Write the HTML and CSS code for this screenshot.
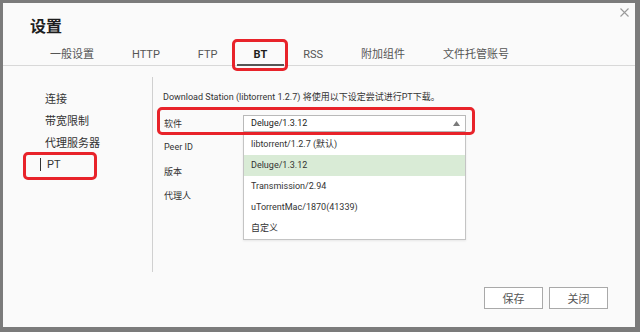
FILE: index.html
```html
<!DOCTYPE html>
<html lang="zh-CN">
<head>
<meta charset="utf-8">
<title>设置</title>
<link rel="stylesheet" href="styles.css">
</head>
<body>
<div class="dialog">
  <div class="header">
    <h1 class="title">设置</h1>
    <span class="close">
      <svg width="9" height="9" viewBox="0 0 9 9"><path d="M0.5 0.5 L8.5 8.5 M8.5 0.5 L0.5 8.5" stroke="#9a9a9a" stroke-width="1.1" fill="none"/></svg>
    </span>
  </div>
  <div class="tabs">
    <span class="tab">一般设置</span>
    <span class="tab">HTTP</span>
    <span class="tab">FTP</span>
    <span class="tab active">BT</span>
    <span class="tab">RSS</span>
    <span class="tab">附加组件</span>
    <span class="tab">文件托管账号</span>
  </div>
  <div class="main">
    <div class="sidebar">
      <div class="nav-item">连接</div>
      <div class="nav-item">带宽限制</div>
      <div class="nav-item">代理服务器</div>
      <div class="nav-item active"><span class="nav-mark">PT</span></div>
    </div>
    <div class="content">
      <p class="desc">Download Station (libtorrent 1.2.7) 将使用以下设定尝试进行PT下载。</p>
      <div class="row">
        <span class="label">软件</span>
        <div class="select">
          <span class="select-value">Deluge/1.3.12</span>
          <svg class="arrow" width="7" height="5" viewBox="0 0 7 5"><path d="M0 5 L3.5 0 L7 5 Z" fill="#7a7a7a"/></svg>
          <div class="menu">
            <div class="menu-item">libtorrent/1.2.7 (默认)</div>
            <div class="menu-item selected">Deluge/1.3.12</div>
            <div class="menu-item">Transmission/2.94</div>
            <div class="menu-item">uTorrentMac/1870(41339)</div>
            <div class="menu-item">自定义</div>
          </div>
        </div>
      </div>
      <div class="row">
        <span class="label">Peer ID</span>
      </div>
      <div class="row">
        <span class="label">版本</span>
      </div>
      <div class="row">
        <span class="label">代理人</span>
        <span class="value">Deluge/1.3.12 (http://deluge-torrent.org)</span>
      </div>
    </div>
  </div>
  <div class="footer">
    <button class="btn">保存</button>
    <button class="btn">关闭</button>
  </div>
</div>
<div class="mark mark-tab"></div>
<div class="mark mark-row"></div>
<div class="mark mark-nav"></div>
</body>
</html>
```

FILE: styles.css
```css
* { box-sizing: border-box; }
html, body { margin: 0; padding: 0; }
body {
  width: 640px;
  height: 332px;
  overflow: hidden;
  background: #7b7b7b;
  font-family: Roboto, "Noto Sans CJK SC", sans-serif;
  color: #333;
  position: relative;
}
.dialog {
  margin: 3px 0 0 3px;
  width: 632px;
  height: 324px;
  background: #fafafa;
  display: flex;
  flex-direction: column;
}
.header {
  display: flex;
  justify-content: space-between;
  align-items: flex-start;
  padding: 12px 6px 0 27px;
  height: 32px;
}
.title {
  margin: 0;
  font-size: 16px;
  line-height: 20px;
  font-weight: bold;
  color: #1e1e1e;
  font-family: "Noto Sans CJK SC", sans-serif;
}
.close { display: block; margin-top: -7px; line-height: 0; }
.tabs {
  display: flex;
  margin-top: 10px;
  padding-left: 28px;
  border-bottom: 1px solid #d8d8d8;
}
.tab {
  padding: 0 19px;
  font-size: 11px;
  line-height: 20px;
  color: #555;
}
.tab.active {
  font-weight: bold;
  color: #1e1e1e;
  padding: 0 17px;
  border-bottom: 2px solid #555;
  margin-bottom: -1px;
  line-height: 19px;
}
.main {
  display: flex;
  height: 206px;
}
.sidebar {
  width: 150px;
  margin-top: 11px;
  height: 195px;
  border-right: 1px solid #d0d0d0;
  padding: 10px 0 0 37px;
}
.nav-item {
  height: 22px;
  display: flex;
  align-items: center;
  padding-left: 5px;
  font-size: 11px;
  color: #333;
}
.nav-item.active { padding-left: 0; }
.nav-mark {
  border-left: 1px solid #333;
  padding-left: 6px;
  line-height: 13px;
}
.content {
  flex: 1;
  padding: 23px 0 0 11px;
}
.desc {
  margin: 0 0 6px -1px;
  font-size: 9px;
  line-height: 16px;
  color: #333;
}
.row {
  display: flex;
  align-items: center;
  height: 24px;
  font-size: 9px;
}
.label { width: 79px; color: #333; }
.value { color: #f0f0f0; padding-left: 8px; }
.select {
  position: relative;
  width: 223px;
  height: 17px;
  border: 1px solid #b9b9b9;
  background: #fff;
  display: flex;
  align-items: center;
  justify-content: space-between;
  padding: 0 5px 0 7px;
}
.select-value { color: #222; }
.arrow { display: block; }
.menu {
  position: absolute;
  left: -1px;
  top: 16px;
  width: 223px;
  border: 1px solid #c4c4c4;
  background: rgba(255, 255, 255, 0.97);
  padding-top: 1px;
  box-shadow: 0 1px 2px rgba(0,0,0,0.08);
}
.menu-item {
  height: 21px;
  line-height: 21px;
  padding-left: 7px;
  color: #333;
  font-size: 9px;
}
.menu-item.selected { background: #d9ebd6; }
.footer {
  display: flex;
  justify-content: flex-end;
  gap: 6px;
  padding-right: 27px;
  margin-top: 15px;
}
.btn {
  width: 59px;
  height: 22px;
  border: 1px solid #a9a9a9;
  background: #fff;
  font-family: "Noto Sans CJK SC", sans-serif;
  font-size: 11px;
  color: #555;
  padding: 0;
}
.mark {
  position: absolute;
  border: 3px solid #e8232a;
  border-radius: 5px;
}
.mark-tab { left: 232px; top: 39px; width: 56px; height: 32px; }
.mark-row { left: 157px; top: 107px; width: 318px; height: 28px; }
.mark-nav { left: 23px; top: 152px; width: 74px; height: 28px; }
```
